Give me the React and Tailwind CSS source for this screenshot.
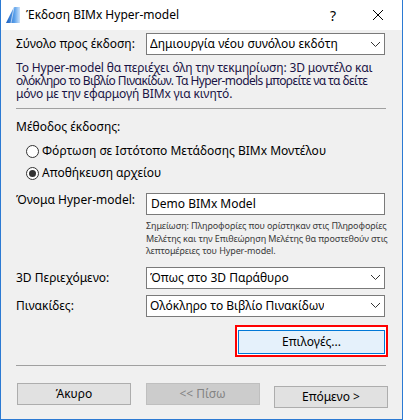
import React from "react";

const font = { fontFamily: '"Noto Sans", "Open Sans", sans-serif' };

const Chevron = () => (
  <svg width="11" height="7" viewBox="0 0 11 7" className="shrink-0">
    <path d="M1 1l4.5 4.5L10 1" fill="none" stroke="#333" strokeWidth="1" />
  </svg>
);

const Select = ({ value }) => (
  <div className="flex h-[22px] w-[239px] items-center justify-between border border-[#7a7a7a] bg-white pl-[3px] pr-[3px]">
    <span className="truncate text-[12px] text-[#000]">{value}</span>
    <Chevron />
  </div>
);

const Radio = ({ checked, label }) => (
  <div className="flex h-[22px] items-center gap-[3px] pl-[10px]">
    <span className="flex h-[13px] w-[13px] items-center justify-center rounded-full border border-[#333] bg-white">
      {checked && <span className="h-[7px] w-[7px] rounded-full bg-[#333]" />}
    </span>
    <span className="text-[12px] text-[#000]">{label}</span>
  </div>
);

const DialogButton = ({ children, disabled }) => (
  <button
    className={
      disabled
        ? "h-[22px] w-[114px] border border-[#bfbfbf] bg-[#cccccc] text-[12px] text-[#838383]"
        : "h-[22px] w-[114px] border border-[#adadad] bg-[#e1e1e1] text-[12px] text-[#000]"
    }
  >
    {children}
  </button>
);

export default function App() {
  return (
    <div style={font} className="flex h-[420px] w-[403px] flex-col border border-t-0 border-[#2b7ad3] bg-[#f0f0f0]">
      {/* title bar */}
      <div className="flex h-[30px] shrink-0 items-center bg-white pl-[5px]">
        <svg width="14" height="16" viewBox="0 0 14 16">
          <defs>
            <linearGradient id="g" x1="0" x2="1" y1="0" y2="0">
              <stop offset="0" stopColor="#1a5fc0" />
              <stop offset="0.6" stopColor="#5aa0ea" />
              <stop offset="1" stopColor="#cfe4fb" />
            </linearGradient>
          </defs>
          <path d="M0 16L8 0h6v16z" fill="url(#g)" />
          <path d="M8 0l-3 16" stroke="#ffffff" strokeWidth="1" opacity="0.6" />
        </svg>
        <span className="ml-[6px] text-[12px] text-[#000]">Έκδοση BIMx Hyper-model</span>
        <span className="ml-auto mr-[36px] text-[14px] text-[#000]">?</span>
        <svg width="12" height="12" viewBox="0 0 12 12" className="mr-[18px]">
          <path d="M1 1l10 10M11 1L1 11" stroke="#000" strokeWidth="1" />
        </svg>
      </div>

      {/* body */}
      <div className="flex flex-1 flex-col pl-[15px] pr-[16px]">
        <div className="mt-[3px] flex items-center">
          <span className="w-[130px] text-[12px] text-[#000]">Σύνολο προς έκδοση:</span>
          <Select value="Δημιουργία νέου συνόλου εκδότη" />
        </div>
        <div className="mt-[6px] whitespace-nowrap text-[12px] leading-[13px] text-[#1a1445]">
          <div className="tracking-[-0.15px]">Το Hyper-model θα περιέχει όλη την τεκμηρίωση: 3D μοντέλο και</div>
          <div className="tracking-[-0.6px]">ολόκληρο το Βιβλίο Πινακίδων. Τα Hyper-models μπορείτε να τα δείτε</div>
          <div className="tracking-[-0.15px]">μόνο με την εφαρμογή BIMx για κινητό.</div>
        </div>
        <div className="mt-[8px] h-px bg-[#a0a0a0]" />

        <div className="mt-[10px] text-[12px] leading-[16px] text-[#000]">Μέθοδος έκδοσης:</div>
        <div className="mt-[5px] flex flex-col">
          <Radio label="Φόρτωση σε Ιστότοπο Μετάδοσης BIMx Μοντέλου" />
          <Radio checked label="Αποθήκευση αρχείου" />
        </div>

        <div className="mt-[9px] flex items-start">
          <span className="w-[130px] text-[12px] leading-[14px] text-[#000]">Όνομα Hyper-model:</span>
          <div className="flex h-[22px] w-[239px] items-center border border-[#7a7a7a] bg-white pl-[4px] text-[12px] text-[#000]">
            Demo BIMx Model
          </div>
        </div>
        <div className="ml-[130px] mt-[5px] whitespace-nowrap text-[9px] leading-[12.5px] tracking-[-0.1px] text-[#3a3a3a]">
          <div>Σημείωση: Πληροφορίες που ορίστηκαν στις Πληροφορίες</div>
          <div>Μελέτης και την Επιθεώρηση Μελέτης θα προστεθούν στις</div>
          <div>λεπτομέρειες του Hyper-model.</div>
        </div>

        <div className="mt-[9px] flex items-center">
          <span className="w-[130px] text-[12px] text-[#000]">3D Περιεχόμενο:</span>
          <Select value="Όπως στο 3D Παράθυρο" />
        </div>
        <div className="mt-[6px] flex items-center">
          <span className="w-[130px] text-[12px] text-[#000]">Πινακίδες:</span>
          <Select value="Ολόκληρο το Βιβλίο Πινακίδων" />
        </div>

        <div className="mt-[8px] flex justify-end">
          <div className="-mr-[2px] border-2 border-[#ff0000] bg-white p-px">
            <button className="h-[24px] w-[147px] border border-[#0078d7] bg-[#e5f1fb] text-[12px] text-[#000]">
              Επιλογές...
            </button>
          </div>
        </div>

        <div className="mt-[8px] h-px bg-[#a0a0a0]" />

        <div className="mt-[17px] flex justify-between pl-px">
          <DialogButton>Άκυρο</DialogButton>
          <DialogButton disabled>{"<< Πίσω"}</DialogButton>
          <span className="-mr-[2px]">
            <DialogButton>Επόμενο &gt;</DialogButton>
          </span>
        </div>
      </div>
    </div>
  );
}
